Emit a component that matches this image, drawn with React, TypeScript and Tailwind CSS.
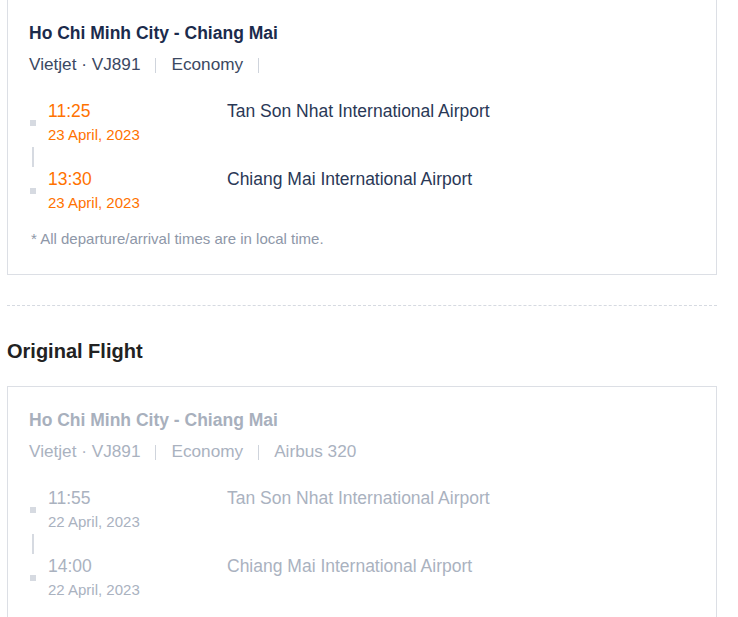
import React from "react";

type Stop = { time: string; date: string; airport: string };
type Flight = {
  route: string;
  airline: string;
  cabin: string;
  aircraft?: string;
  stops: Stop[];
};

const current: Flight = {
  route: "Ho Chi Minh City - Chiang Mai",
  airline: "Vietjet · VJ891",
  cabin: "Economy",
  aircraft: "",
  stops: [
    { time: "11:25", date: "23 April, 2023", airport: "Tan Son Nhat International Airport" },
    { time: "13:30", date: "23 April, 2023", airport: "Chiang Mai International Airport" },
  ],
};

const original: Flight = {
  route: "Ho Chi Minh City - Chiang Mai",
  airline: "Vietjet · VJ891",
  cabin: "Economy",
  aircraft: "Airbus 320",
  stops: [
    { time: "11:55", date: "22 April, 2023", airport: "Tan Son Nhat International Airport" },
    { time: "14:00", date: "22 April, 2023", airport: "Chiang Mai International Airport" },
  ],
};

function Sep() {
  return <span className="inline-block w-px h-[15px] bg-[#cfd4dc] mx-[15px] mt-[2px]" />;
}

function StopRow({ stop, muted }: { stop: Stop; muted: boolean }) {
  return (
    <div className="flex items-center">
      <div className="w-[19px] shrink-0 flex items-center">
        <span className="ml-px block w-[6px] h-[6px] bg-[#d6dae1]" />
      </div>
      <div className="w-[179px] shrink-0">
        <div className={`text-[17.5px] leading-[24px] ${muted ? "text-[#aab2bf]" : "text-[#ff7200]"}`}>{stop.time}</div>
        <div className={`text-[15px] leading-[23px] ${muted ? "text-[#aab2bf]" : "text-[#ff7200]"}`}>{stop.date}</div>
      </div>
      <div className="self-start">
        <div className={`text-[17.5px] leading-[24px] ${muted ? "text-[#aab2bf]" : "text-[#2a3856]"}`}>{stop.airport}</div>
      </div>
    </div>
  );
}

function FlightCard({ flight, muted, className }: { flight: Flight; muted: boolean; className?: string }) {
  return (
    <div className={`border border-[#dcdfe5] pt-[21px] pb-[25px] px-[21px] ${className ?? ""}`}>
      <div className={`text-[17.5px] leading-[24px] font-bold ${muted ? "text-[#a8b0bd]" : "text-[#1b2b4c]"}`}>
        {flight.route}
      </div>
      <div className={`mt-[7px] flex items-center text-[17.2px] leading-[24px] ${muted ? "text-[#aab2bf]" : "text-[#3b4862]"}`}>
        <span>{flight.airline}</span>
        <Sep />
        <span>{flight.cabin}</span>
        <Sep />
        {flight.aircraft ? <span>{flight.aircraft}</span> : null}
      </div>
      <div className="mt-[23px]">
        <StopRow stop={flight.stops[0]} muted={muted} />
        <div className="h-[21px] pt-px pl-[3px]">
          <div className="w-[2px] h-[20px] bg-[#d6dae1]" />
        </div>
        <StopRow stop={flight.stops[1]} muted={muted} />
      </div>
      <div className="mt-[15px] ml-[2px] text-[15px] leading-[20px] text-[#8e97a8]">
        * All departure/arrival times are in local time.
      </div>
    </div>
  );
}

export default function App() {
  return (
    <div
      className="bg-white h-[617px] pl-[7px] overflow-hidden"
      style={{ fontFamily: '"Liberation Sans", Arial, sans-serif' }}
    >
      <div className="w-[710px]">
        <FlightCard flight={current} muted={false} className="-mt-px" />
        <div className="mt-[30px] border-t border-dashed border-[#d6dae1]" />
        <h2 className="mt-[31px] text-[20px] leading-[28px] font-bold text-[#222222]">Original Flight</h2>
        <FlightCard flight={original} muted={true} className="mt-[21px]" />
      </div>
    </div>
  );
}
